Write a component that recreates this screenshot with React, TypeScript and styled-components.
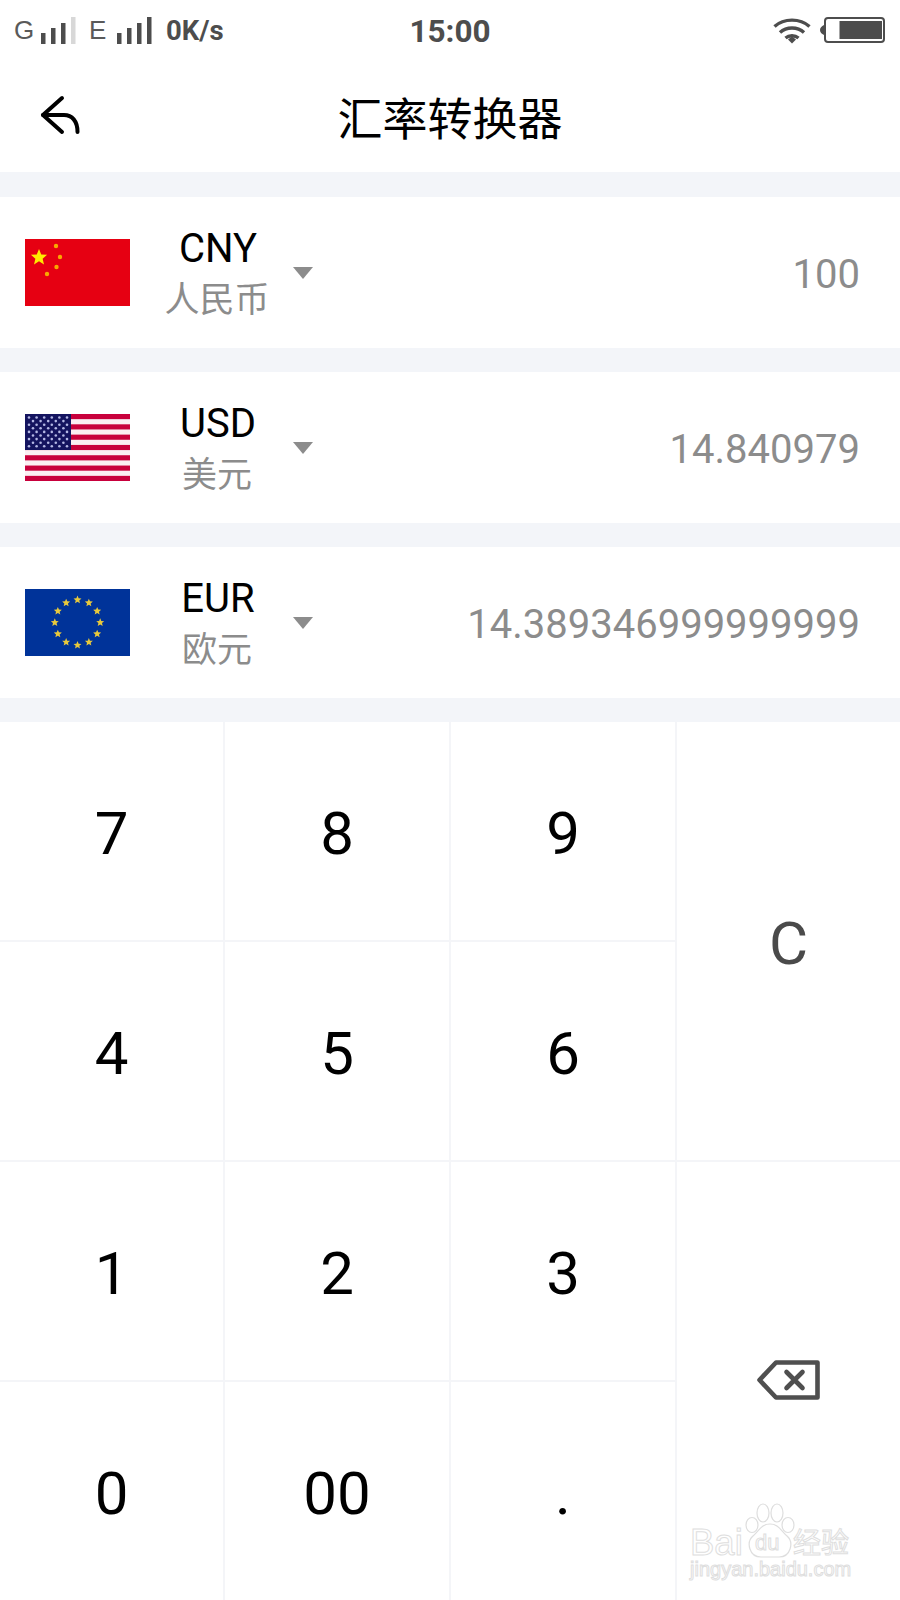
import { FC } from 'react';
import styled, { createGlobalStyle } from 'styled-components';

const GlobalStyle = createGlobalStyle`
  html, body {
    margin: 0;
    padding: 0;
    background: #ffffff;
  }
`;

const Page = styled.div`
  position: relative;
  width: 900px;
  height: 1600px;
  overflow: hidden;
  display: flex;
  flex-direction: column;
  background: #f3f5f9;
  font-family: Roboto, "Noto Sans CJK SC", sans-serif;
`;

const StatusBar = styled.div`
  height: 60px;
  background: #ffffff;
  display: grid;
  grid-template-columns: 1fr auto 1fr;
  align-items: center;
  color: #4d4d4d;
`;

const StatusLeft = styled.div`
  display: flex;
  align-items: center;
  padding-left: 14px;
`;

const NetLabel = styled.span<{ $second?: boolean }>`
  font-family: "Liberation Sans", sans-serif;
  font-size: 26px;
  width: ${(p) => (p.$second ? '28px' : '27px')};
  margin-left: ${(p) => (p.$second ? '12px' : '0')};
  color: #5a5a5a;
`;

const Speed = styled.span`
  font-size: 27.5px;
  font-weight: 700;
  margin-left: 13px;
`;

const Clock = styled.span`
  font-size: 31.5px;
  font-weight: 700;
  padding-top: 2px;
`;

const StatusRight = styled.div`
  display: flex;
  align-items: center;
  justify-content: flex-end;
  gap: 9px;
  padding-right: 14px;
`;

const Header = styled.header`
  height: 112px;
  background: #ffffff;
  display: flex;
  align-items: center;
  justify-content: center;
  position: relative;
  margin-bottom: 25px;
`;

const BackIcon = styled.svg`
  position: absolute;
  left: 38px;
  top: 34px;
`;

const Title = styled.h1`
  margin: 0;
  font-size: 45px;
  font-weight: 400;
  color: #000000;
  font-family: "Noto Sans CJK SC", sans-serif;
`;

const CurrencyRow = styled.div`
  height: 151px;
  background: #ffffff;
  margin-bottom: 24px;
  padding: 0 40px 0 25px;
  display: flex;
  align-items: center;
`;

const FlagBox = styled.svg`
  display: block;
  width: 105px;
  height: 67px;
  flex-shrink: 0;
`;

const CurrencyName = styled.div`
  width: 130px;
  margin-left: 22px;
  text-align: center;
  display: flex;
  flex-direction: column;
  align-items: center;
`;

const Code = styled.div`
  font-size: 40px;
  line-height: 50px;
  padding-left: 2px;
  color: #000000;
`;

const Label = styled.div`
  font-size: 35px;
  line-height: 50px;
  margin-top: -2px;
  color: #8c8c8c;
  font-family: "Noto Sans CJK SC", sans-serif;
`;

const Caret = styled.div`
  width: 0;
  height: 0;
  margin-left: 11px;
  border-left: 10.5px solid transparent;
  border-right: 10.5px solid transparent;
  border-top: 12px solid #8c8c8c;
`;

const Amount = styled.div`
  margin-left: auto;
  padding-top: 4px;
  font-size: 40px;
  color: #8c8c8c;
`;

const Keypad = styled.div`
  flex: 1;
  background: #ffffff;
  display: grid;
  grid-template-columns: 225px 226px 226px 223px;
  grid-template-rows: 220px 220px 220px 218px;
`;

const Key = styled.div<{ $tall?: boolean; $muted?: boolean; $last?: boolean; $bottom?: boolean }>`
  display: flex;
  align-items: center;
  justify-content: center;
  padding-top: 5px;
  font-size: 60px;
  color: ${(p) => (p.$muted ? '#4a4a4a' : '#000000')};
  border-right: ${(p) => (p.$last ? 'none' : '2px solid #f4f5f8')};
  border-bottom: ${(p) => (p.$bottom ? 'none' : '2px solid #f4f5f8')};
  grid-row: ${(p) => (p.$tall ? 'span 2' : 'auto')};
`;

const BackspaceSvg = styled.svg`
  margin-top: -7px;
`;

const Watermark = styled.div`
  position: absolute;
  left: 689px;
  top: 1503px;
  width: 170px;
  height: 80px;
  color: transparent;
  -webkit-text-stroke: 1px #dedede;
`;

const MarkBai = styled.span`
  position: absolute;
  left: 1px;
  top: 24px;
  font-family: "Liberation Sans", sans-serif;
  font-size: 36.5px;
  line-height: 32px;
`;

const MarkDu = styled.span`
  position: absolute;
  left: 66px;
  top: 28px;
  font-family: "Liberation Sans", sans-serif;
  font-size: 22px;
  line-height: 24px;
`;

const MarkCn = styled.span`
  position: absolute;
  left: 104px;
  top: 20px;
  font-family: "Noto Sans CJK SC", sans-serif;
  font-size: 28px;
  line-height: 36px;
  white-space: nowrap;
`;

const MarkUrl = styled.span`
  position: absolute;
  left: 1px;
  top: 56px;
  font-family: "Liberation Sans", sans-serif;
  font-size: 20px;
  line-height: 20px;
  white-space: nowrap;
`;

const PawIcon = styled.svg`
  position: absolute;
  left: 56px;
  top: 0;
`;

const starPoints = (cx: number, cy: number, r: number, rot = 0) =>
  Array.from({ length: 10 }, (_, i) => {
    const a = ((i * 36 - 90 + rot) * Math.PI) / 180;
    const len = i % 2 === 0 ? r : r * 0.45;
    return `${cx + len * Math.cos(a)},${cy + len * Math.sin(a)}`;
  }).join(' ');

const FlagCN: FC = () => (
  <FlagBox viewBox="0 0 105 67">
    <rect width="105" height="67" fill="#e60012" />
    <polygon points={starPoints(14, 18.5, 8.5)} fill="#ffeb00" />
    <circle cx="31" cy="7" r="2.2" fill="#f9a800" />
    <circle cx="35" cy="18" r="2.2" fill="#f9a800" />
    <circle cx="31.5" cy="28" r="2.2" fill="#f9a800" />
    <circle cx="22" cy="35" r="2.2" fill="#f9a800" />
  </FlagBox>
);

const FlagUS: FC = () => (
  <FlagBox viewBox="0 0 105 67">
    <rect width="105" height="67" fill="#fbeef2" />
    {Array.from({ length: 7 }, (_, i) => (
      <rect key={i} y={i * 10.31} width="105" height="5.15" fill="#c8003c" />
    ))}
    <rect width="46" height="36" fill="#14145f" />
    {Array.from({ length: 9 }, (_, row) =>
      Array.from({ length: row % 2 === 0 ? 6 : 5 }, (_, col) => (
        <circle
          key={`${row}-${col}`}
          cx={(row % 2 === 0 ? 4 : 8) + col * 7.6}
          cy={3.5 + row * 3.6}
          r="1.3"
          fill="#b4b8e4"
        />
      ))
    )}
  </FlagBox>
);

const FlagEU: FC = () => (
  <FlagBox viewBox="0 0 105 67">
    <rect width="105" height="67" fill="#003399" />
    {Array.from({ length: 12 }, (_, i) => {
      const a = (i * 30 * Math.PI) / 180;
      return (
        <polygon
          key={i}
          points={starPoints(52.5 + 22.7 * Math.sin(a), 33.5 - 22.7 * Math.cos(a), 4.2)}
          fill="#e8c93c"
        />
      );
    })}
  </FlagBox>
);

const SignalBars: FC<{ lastOff?: boolean }> = ({ lastOff }) => (
  <svg width="36" height="28" viewBox="0 0 36 28">
    <rect x="0" y="17" width="4.5" height="11" fill="#4d4d4d" />
    <rect x="10" y="12" width="4.5" height="16" fill="#4d4d4d" />
    <rect x="20" y="7" width="4.5" height="21" fill="#4d4d4d" />
    <rect x="30" y="1" width="4.5" height="27" fill={lastOff ? '#d8d8d8' : '#4d4d4d'} />
  </svg>
);

const WifiIcon: FC = () => (
  <svg width="38" height="27" viewBox="0 0 38 27" fill="none" stroke="#4d4d4d" strokeWidth="3.4">
    <path d="M1.5 9.5C11 1 27 1 36.5 9.5" />
    <path d="M7 15.5C13.5 9.5 24.5 9.5 31 15.5" />
    <path d="M12.5 21C16 18 22 18 25.5 21" />
    <path d="M15 22.5L19 19.5L23 22.5L19 26.5Z" fill="#4d4d4d" stroke="none" />
  </svg>
);

const BatteryIcon: FC = () => (
  <svg width="66" height="26" viewBox="0 0 66 26">
    <path d="M4 8C1.5 9 0 11 0 13S1.5 17 4 18Z" fill="#4d4d4d" />
    <rect x="5" y="1" width="59" height="24" rx="3" fill="#ffffff" stroke="#4d4d4d" strokeWidth="2" />
    <rect x="19.5" y="4" width="42.5" height="18" fill="#4d4d4d" />
  </svg>
);

const BackspaceIcon: FC = () => (
  <BackspaceSvg width="64" height="40" viewBox="0 0 64 40" fill="none" stroke="#4f4f4f" strokeWidth="4.6" strokeLinejoin="round">
    <path d="M19 2.5H60.5V37.5H19L2.5 20Z" />
    <path d="M29.5 12L45.5 28M45.5 12L29.5 28" strokeLinecap="round" />
  </BackspaceSvg>
);

const currencies = [
  { code: 'CNY', label: '人民币', amount: '100', flag: <FlagCN /> },
  { code: 'USD', label: '美元', amount: '14.840979', flag: <FlagUS /> },
  { code: 'EUR', label: '欧元', amount: '14.389346999999999', flag: <FlagEU /> },
];

export default function App() {
  return (
    <Page>
      <GlobalStyle />
      <StatusBar>
        <StatusLeft>
          <NetLabel>G</NetLabel>
          <SignalBars lastOff />
          <NetLabel $second>E</NetLabel>
          <SignalBars />
          <Speed>0K/s</Speed>
        </StatusLeft>
        <Clock>15:00</Clock>
        <StatusRight>
          <WifiIcon />
          <BatteryIcon />
        </StatusRight>
      </StatusBar>

      <Header>
        <BackIcon width="46" height="44" viewBox="0 0 46 44" fill="none" stroke="#000000" strokeWidth="4" strokeLinecap="round" strokeLinejoin="round">
          <path d="M24 4L5 21L24 38" />
          <path d="M5 21H26C34 21 39.5 27 39.5 38" />
        </BackIcon>
        <Title>汇率转换器</Title>
      </Header>

      {currencies.map((c) => (
        <CurrencyRow key={c.code}>
          {c.flag}
          <CurrencyName>
            <Code>{c.code}</Code>
            <Label>{c.label}</Label>
          </CurrencyName>
          <Caret />
          <Amount>{c.amount}</Amount>
        </CurrencyRow>
      ))}

      <Keypad>
        <Key>7</Key>
        <Key>8</Key>
        <Key>9</Key>
        <Key $tall $muted $last>C</Key>
        <Key>4</Key>
        <Key>5</Key>
        <Key>6</Key>
        <Key>1</Key>
        <Key>2</Key>
        <Key>3</Key>
        <Key $tall $last $bottom><BackspaceIcon /></Key>
        <Key $bottom>0</Key>
        <Key $bottom>00</Key>
        <Key $bottom>.</Key>
      </Keypad>

      <Watermark>
        <MarkBai>Bai</MarkBai>
        <PawIcon width="50" height="56" viewBox="0 0 50 56" fill="#ffffff" stroke="#dedede" strokeWidth="1.2">
          <ellipse cx="18" cy="10" rx="6" ry="9" />
          <ellipse cx="32" cy="10" rx="6" ry="9" />
          <ellipse cx="7" cy="22" rx="6" ry="7.5" />
          <ellipse cx="43" cy="22" rx="6" ry="7.5" />
          <path d="M25 21C16 21 14 28 8 33C1 39 4 54 16 54H34C46 54 49 39 42 33C36 28 34 21 25 21Z" />
        </PawIcon>
        <MarkDu>du</MarkDu>
        <MarkCn>经验</MarkCn>
        <MarkUrl>jingyan.baidu.com</MarkUrl>
      </Watermark>
    </Page>
  );
}
